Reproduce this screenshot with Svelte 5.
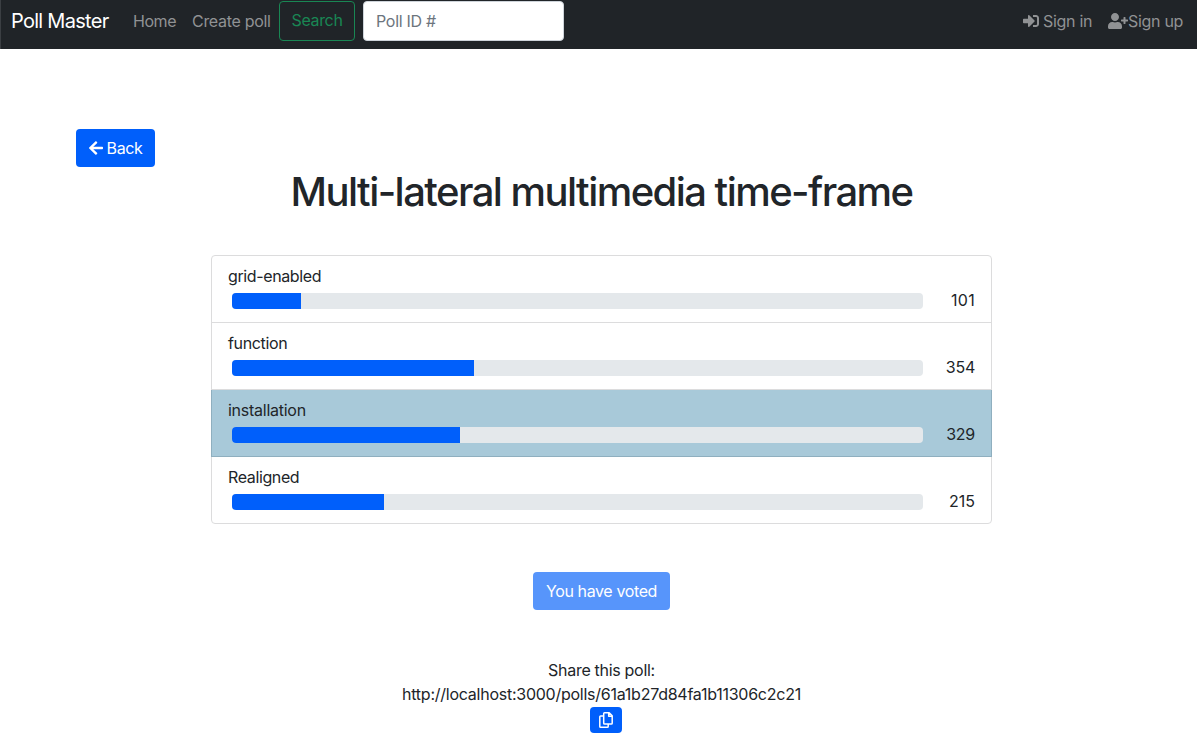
<script>
  const options = [
    { name: 'grid-enabled', votes: 101, share: 10, gap: -0.38, digits: 0.3 },
    { name: 'function', votes: 354, share: 35, gap: -0.34, digits: -0.25 },
    { name: 'installation', votes: 329, share: 33, gap: -0.26, digits: -0.25, chosen: true },
    { name: 'Realigned', votes: 215, share: 22, gap: -0.38, digits: 0 }
  ];
</script>

<nav>
  <a class="brand" href="#home">Poll Master</a>
  <a class="home" href="#home">Home</a>
  <a class="create" href="#create">Create poll</a>
  <button class="search">Search</button>
  <input type="text" placeholder="Poll ID #" />
  <div class="account">
    <a class="signin" href="#signin">
      <svg width="16" height="16" viewBox="0 0 512 512" fill="currentColor"><path d="M416 448h-84c-6.600 0-12-5.400-12-12v-40c0-6.600 5.400-12 12-12h84c17.700 0 32-14.300 32-32V160c0-17.700-14.300-32-32-32h-84c-6.600 0-12-5.400-12-12V76c0-6.600 5.400-12 12-12h84c53 0 96 43 96 96v192c0 53-43 96-96 96zm-47-209L201 71c-15-15-41-4.500-41 17v96H24c-13.300 0-24 10.700-24 24v96c0 13.300 10.700 24 24 24h136v96c0 21.500 26 32 41 17l168-168c9.300-9.400 9.300-24.600 0-34z"/></svg>
      <span>Sign in</span>
    </a>
    <a class="signup" href="#signup">
      <svg width="20" height="16" viewBox="0 0 640 512" fill="currentColor"><path d="M624 208h-64v-64c0-8.800-7.200-16-16-16h-32c-8.800 0-16 7.200-16 16v64h-64c-8.800 0-16 7.200-16 16v32c0 8.800 7.200 16 16 16h64v64c0 8.800 7.200 16 16 16h32c8.800 0 16-7.200 16-16v-64h64c8.800 0 16-7.200 16-16v-32c0-8.800-7.200-16-16-16zm-400 48c70.700 0 128-57.300 128-128S294.700 0 224 0 96 57.300 96 128s57.300 128 128 128zm89.600 32h-16.700c-22.200 10.200-46.900 16-72.900 16s-50.600-5.800-72.900-16h-16.700C60.200 288 0 348.200 0 422.400V464c0 26.500 21.500 48 48 48h352c26.500 0 48-21.500 48-48v-41.600c0-74.200-60.200-134.400-134.400-134.400z"/></svg>
      <span>Sign up</span>
    </a>
  </div>
</nav>

<main>
  <button class="primary back">
    <svg width="14" height="16" viewBox="0 0 448 512" fill="currentColor"><path d="M257.500 445.100l-22.200 22.200c-9.400 9.400-24.600 9.400-33.900 0L7 273c-9.400-9.400-9.400-24.600 0-33.900L201.400 44.700c9.400-9.400 24.600-9.400 33.900 0l22.200 22.200c9.500 9.500 9.300 25-.4 34.300L136.600 216H424c13.300 0 24 10.700 24 24v32c0 13.300-10.700 24-24 24H136.600l120.500 114.800c9.800 9.300 10 24.800.4 34.300z"/></svg>
    <span>Back</span>
  </button>
  <h1>Multi-lateral multimedia time-frame</h1>

  <ul>
    {#each options as option}
      <li class:chosen={option.chosen}>
        <div class="name" style="letter-spacing: {option.gap}px">{option.name}</div>
        <div class="result">
          <div class="track"><div class="fill" style="width: {option.share}%"></div></div>
          <span style="letter-spacing: {option.digits}px">{option.votes}</span>
        </div>
      </li>
    {/each}
  </ul>

  <button class="primary voted" disabled><span>You have voted</span></button>

  <section>
    <div class="share">Share this poll:</div>
    <div class="url">http://localhost:3000/polls/61a1b27d84fa1b11306c2c21</div>
    <button class="primary copy" aria-label="Copy link">
      <svg width="14" height="16" viewBox="0 0 14 16" fill="none" stroke="currentColor" stroke-width="1.500" stroke-linejoin="round"><path d="M5.500.8h4.700l3 3v7.400a.8.800 0 0 1-.8.800H5.500a.8.800 0 0 1-.8-.8V1.600a.8.800 0 0 1 .8-.8zM9.700.8v3.500h3.500M4.700 4H1.600a.8.800 0 0 0-.8.800v9.600a.8.800 0 0 0 .8.800h6.800a.8.800 0 0 0 .8-.8V12"/></svg>
    </button>
  </section>
</main>

<style>
  :global(body) {
    margin: 0;
    background: #fff;
    color: #212529;
    font: 16px/24px Inter, "Liberation Sans", sans-serif;
    overflow: hidden;
  }
  nav, nav *, main, main * { box-sizing: border-box; }
  span, a, h1, .url, .share { white-space: nowrap; }
  svg { display: block; flex: none; }
  button, input { font: inherit; }

  nav {
    height: 49px;
    display: flex;
    align-items: flex-start;
    padding: 1px 14px 0 10px;
    border-left: 1px solid #3b3f43;
    background: #202428;
  }
  a { color: #909294; text-decoration: none; line-height: 24px; margin-top: 8px; }
  .brand { width: 122px; font-size: 20px; color: #fff; letter-spacing: -.72px; }
  .home { width: 59px; letter-spacing: -.45px; }
  .create { width: 87px; letter-spacing: -.3px; }
  .search {
    width: 76px;
    height: 40px;
    padding: 0 0 2px;
    border: 1px solid #198754;
    border-radius: 4px;
    background: none;
    color: #198754;
    letter-spacing: -.35px;
  }
  input {
    width: 201px;
    height: 40px;
    margin-left: 8px;
    padding: 0 12px;
    border: 1px solid #ced4da;
    border-radius: 4px;
    background: #fff;
    letter-spacing: -.3px;
  }
  input::placeholder { color: #6c757d; opacity: 1; }
  .account { display: flex; margin-left: auto; }
  .account a { display: flex; align-items: center; }
  .signin { width: 85px; gap: 4px; letter-spacing: -.3px; }
  .signup { width: 75px; letter-spacing: -.3px; }

  main {
    display: flex;
    flex-direction: column;
    align-items: center;
    padding: 80px 70px 0 76px;
  }
  .primary {
    display: flex;
    align-items: center;
    justify-content: center;
    height: 38px;
    padding: 0;
    border: 0;
    border-radius: 4px;
    background: #005ffb;
    color: #fff;
  }
  .back { align-self: flex-start; width: 79px; gap: 4px; letter-spacing: -.4px; }
  h1 {
    margin: 1px 0 39px;
    font-size: 40px;
    line-height: 48px;
    font-weight: 500;
    letter-spacing: -1.550px;
  }
  ul {
    width: 781px;
    margin: 0;
    padding: 0;
    list-style: none;
    border: 1px solid #dcdcdd;
    border-radius: 4px;
  }
  li { height: 67px; padding: 8px 16px; border-bottom: 1px solid #dcdcdd; }
  li:last-child { height: 66px; border-bottom: 0; }
  .chosen {
    margin: 0 -1px;
    padding: 8px 17px;
    background: #a8c9d9;
    border-bottom-color: #8fafbf;
    box-shadow: inset 1px 0 #8fafbf, inset -1px 0 #8fafbf;
  }
  .result { display: flex; justify-content: space-between; }
  .track {
    width: 691px;
    height: 16px;
    margin: 5px 0 0 4px;
    border-radius: 4px;
    overflow: hidden;
    background: #e4e8eb;
  }
  .fill { height: 100%; background: #005ffb; }
  .voted { width: 137px; margin-top: 48px; background: #5795fb; letter-spacing: -.38px; }
  section {
    display: flex;
    flex-direction: column;
    align-items: center;
    margin-top: 48px;
  }
  .share { letter-spacing: -.3px; }
  .url { letter-spacing: -.25px; }
  .copy { width: 32px; height: 26px; margin: 1px 0 0 10px; }
</style>
